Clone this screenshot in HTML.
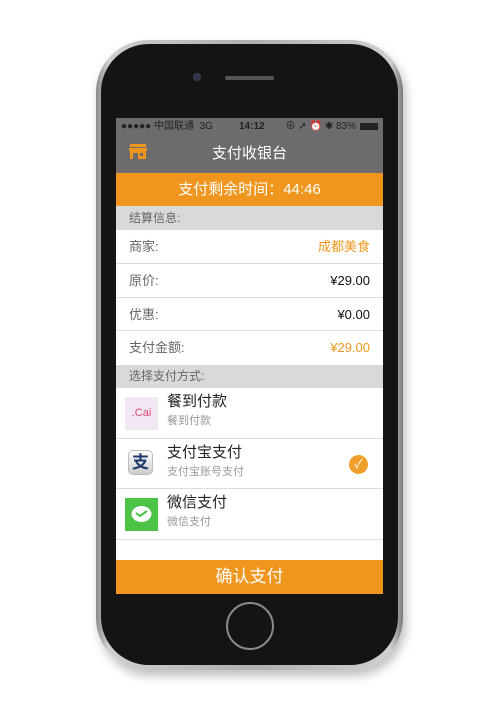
<!DOCTYPE html>
<html><head><meta charset="utf-8"><style>
*{margin:0;padding:0;box-sizing:border-box}
body{width:500px;height:713px;background:#fff;position:relative;overflow:hidden;font-family:"Liberation Sans","Noto Sans CJK SC",sans-serif}
.a{position:absolute}
.phone{left:96px;top:40px;width:307px;height:630px;border-radius:52px;background:linear-gradient(90deg,#8a8a8c,#cfcfd1 4%,#b0b0b2 50%,#cfcfd1 96%,#7a7a7c);box-shadow:3px 6px 10px rgba(0,0,0,.25)}
.inner{left:101px;top:44px;width:297px;height:621px;border-radius:48px;background:#141414}
.scr{left:116px;top:118px;width:267px;height:476px;background:#fff;overflow:hidden}
.row{position:absolute;left:0;width:267px;border-bottom:1px solid #ddd;font-size:13px;color:#666}
.row .l{position:absolute;left:13px;top:0}
.row .r{position:absolute;right:13px;top:0;color:#111}
.sec{position:absolute;left:0;width:267px;background:#d9d9d9;color:#666;font-size:12px;padding-left:13px;line-height:24px}
.pay{position:absolute;left:0;width:267px;height:51px;border-bottom:1px solid #ddd}
.pay .t{position:absolute;left:51px;top:4px;font-size:15px;line-height:20px;color:#222}
.pay .s{position:absolute;left:51px;top:26px;font-size:11px;line-height:14px;color:#999}
.pay .ic{position:absolute;left:9px;top:9px;width:33px;height:33px}
</style></head><body>
<div class="a phone"></div>
<div class="a inner"></div>
<div class="a" style="left:193px;top:73px;width:8px;height:8px;border-radius:50%;background:#2b3550;border:1px solid #444"></div>
<div class="a" style="left:225px;top:76px;width:49px;height:4px;border-radius:2px;background:#555"></div>
<div class="a" style="left:226px;top:602px;width:48px;height:48px;border-radius:50%;border:2px solid #8a8a8a;background:#141414"></div>
<div class="a scr">
 <div class="a" style="left:0;top:0;width:267px;height:55px;background:#6e6b6e"></div>
 <div class="a" style="left:5px;top:2px;font-size:10px;line-height:13px;color:#222;width:257px">●●●●● 中国联通&nbsp; 3G<span style="position:absolute;left:118px;font-weight:bold">14:12</span><span style="position:absolute;right:22px">⊕ ➚ ⏰ ✱ 83%</span><span style="position:absolute;right:0;top:3px;width:18px;height:7px;background:#222"></span></div>
 <svg class="a" style="left:13px;top:26px" width="18" height="15" viewBox="0 0 18 15"><rect x="1" y="0" width="16" height="3" fill="#f0961e"/><rect x="0" y="4" width="18" height="3" fill="#f0961e"/><rect x="1" y="7" width="16" height="8" fill="#f0961e"/><rect x="4" y="9" width="5" height="6" fill="#6e6b6e"/><rect x="11" y="9" width="3" height="3" fill="#6e6b6e"/></svg>
 <div class="a" style="left:0;top:26px;width:267px;text-align:center;color:#fff;font-size:15px;line-height:20px">支付收银台</div>
 <div class="a" style="left:0;top:55px;width:267px;height:33px;background:#f0961e;color:#fff;font-size:15px;text-align:center;line-height:33px">支付剩余时间：44:46</div>
 <div class="sec" style="top:88px">结算信息:</div>
 <div class="row" style="top:112px;height:34px;line-height:34px"><span class="l">商家:</span><span class="r" style="color:#f0961e">成都美食</span></div>
 <div class="row" style="top:146px;height:34px;line-height:34px"><span class="l">原价:</span><span class="r">¥29.00</span></div>
 <div class="row" style="top:180px;height:33px;line-height:33px"><span class="l">优惠:</span><span class="r">¥0.00</span></div>
 <div class="row" style="top:213px;height:34px;line-height:34px;border:0"><span class="l">支付金额:</span><span class="r" style="color:#f0961e">¥29.00</span></div>
 <div class="sec" style="top:247px;height:23px;line-height:22px">选择支付方式:</div>
 <div class="pay" style="top:270px"><div class="ic" style="background:#f1e8f3;color:#e0457a;font-size:11px;line-height:33px;text-align:center">.Cai</div><div class="t">餐到付款</div><div class="s">餐到付款</div></div>
 <div class="pay" style="top:321px;height:50px"><div class="ic" style="left:12px;top:11px;width:25px;height:25px;border-radius:5px;background:linear-gradient(#fff,#ccc);border:1px solid #bbb;color:#1d3b6e;font-size:17px;font-weight:bold;text-align:center;line-height:23px">支</div><div class="t">支付宝支付</div><div class="s">支付宝账号支付</div><div class="a" style="left:233px;top:16px;width:19px;height:19px;border-radius:50%;background:#f0a02a;color:#fff;font-size:12px;text-align:center;line-height:19px">✓</div></div>
 <div class="pay" style="top:371px"><div class="ic" style="background:#4cc247"><svg width="33" height="33" viewBox="0 0 33 33"><ellipse cx="16.5" cy="16" rx="10" ry="8" fill="#fff"/><path d="M10 23 l2-4 3 2z" fill="#fff"/><path d="M11 15 l4 3 7-5" stroke="#4cc247" stroke-width="2" fill="none"/></svg></div><div class="t">微信支付</div><div class="s">微信支付</div></div>
 <div class="a" style="left:0;top:442px;width:267px;height:34px;background:#f0961e;color:#fff;font-size:17px;text-align:center;line-height:34px">确认支付</div>
</div>
</body></html>
